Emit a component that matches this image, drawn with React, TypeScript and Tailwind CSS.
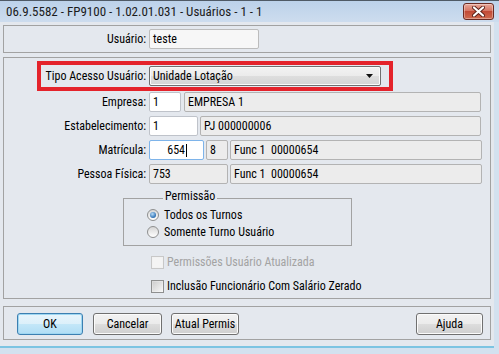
import React from "react";

const FONT = "font-['Roboto_Condensed','Liberation_Sans',sans-serif]";

function CloseBtn() {
  return (
    <div className="w-[31px] h-[17px] rounded-[3px] border border-[#6b2a22] bg-[linear-gradient(#e8a799,#d67563_45%,#c24a36_50%,#cf6a4f)] flex items-center justify-center shadow-[inset_0_0_0_1px_rgba(255,255,255,0.35)]">
      <svg width="13" height="11" viewBox="0 0 13 11">
        <path d="M2 1.5 L11 9.5 M11 1.5 L2 9.5" stroke="#5a2018" strokeWidth="4" strokeLinecap="round" />
        <path d="M2 1.5 L11 9.5 M11 1.5 L2 9.5" stroke="#ffffff" strokeWidth="2.2" strokeLinecap="round" />
      </svg>
    </div>
  );
}

function WhiteBox({ w, children }: { w: string; children?: React.ReactNode }) {
  return (
    <div className={`${w} h-[20px] bg-white border border-[#bfc3ca] rounded-[2px] flex items-center pl-[3px]`}>
      {children}
    </div>
  );
}

function GrayBox({ w, children }: { w: string; children?: React.ReactNode }) {
  return (
    <div className={`${w} h-[20px] bg-[#ececec] border border-[#b3b3b3] rounded-[2px] flex items-center pl-[3px] whitespace-nowrap`}>
      {children}
    </div>
  );
}

function Row({ label, children }: { label: string; children: React.ReactNode }) {
  return (
    <div className="flex items-center h-[20px]">
      <div className="w-[143px] text-right pr-[1px] whitespace-nowrap">{label}</div>
      <div className="ml-[2px] flex items-center gap-[2px]">{children}</div>
    </div>
  );
}

function Radio({ checked }: { checked?: boolean }) {
  return (
    <div className="w-[12px] h-[12px] rounded-full border border-[#8e8f8f] bg-[linear-gradient(#d6d6d6,#ffffff)] flex items-center justify-center">
      {checked && (
        <div className="w-[6px] h-[6px] rounded-full bg-[radial-gradient(circle_at_40%_35%,#b7dcf8,#2c6fb3_70%,#1d4f86)]" />
      )}
    </div>
  );
}

function Check({ disabled }: { disabled?: boolean }) {
  return (
    <div
      className={`w-[13px] h-[13px] border ${
        disabled ? "border-[#c8c8c8] bg-[#f2f2f2]" : "border-[#8e8f8f] bg-[linear-gradient(135deg,#d8d8d8,#f8f8f8)]"
      } flex items-center justify-center`}
    >
      <div className={`w-[9px] h-[9px] ${disabled ? "bg-[#f4f4f4]" : "bg-[linear-gradient(135deg,#cfcfcf,#f4f4f4)]"}`} />
    </div>
  );
}

function Btn({ w, children, def }: { w: string; children: React.ReactNode; def?: boolean }) {
  return (
    <div
      className={`${w} h-[22px] rounded-[3px] border flex items-center justify-center whitespace-nowrap ${
        def
          ? "border-[#3c7fb1] bg-[linear-gradient(#e8f5fc,#dcf0fa_50%,#c4e7f8_50%,#b0ddf5)] shadow-[inset_0_0_0_1px_#9fd7f2]"
          : "border-[#707070] bg-[linear-gradient(#f2f2f2,#ebebeb_50%,#dddddd_50%,#cfcfcf)] shadow-[inset_0_0_0_1px_#fbfbfb]"
      }`}
    >
      {children}
    </div>
  );
}

export default function App() {
  return (
    <div className={`w-[499px] h-[354px] overflow-hidden bg-[#d3e1ef] ${FONT} text-[12px] leading-none text-black`}>
      {/* Title bar */}
      <div className="h-[22px] flex items-center justify-between pl-[6px] pr-[5px] border-t border-[#4f5a66] bg-[linear-gradient(#bcd2ea,#cddcee)]">
        <span className="text-[13px] text-[#1b1b1b] whitespace-nowrap">06.9.5582 - FP9100 - 1.02.01.031 - Usuários - 1 - 1</span>
        <CloseBtn />
      </div>

      {/* Client */}
      <div className="w-[494px] h-[326px] bg-[#e4e8ee] pl-[3px] pt-[3px] border-b-[2px] border-[#7cc4e2]">
        {/* Panel 1 */}
        <div className="w-[488px] h-[28px] border border-[#a2a2a2] pt-[3px]">
          <div className="flex items-center h-[20px]">
            <div className="w-[143px] text-right pr-[1px]">Usuário:</div>
            <div className="ml-[2px] w-[110px] h-[20px] bg-[#f7f7f7] border border-[#bcbcbc] rounded-[2px] flex items-center pl-[3px]">teste</div>
          </div>
        </div>

        {/* Panel 2 */}
        <div className="mt-[4px] w-[488px] h-[242px] border border-[#a2a2a2] pt-[3px]">
          <div className="ml-[33px] w-[356px] h-[30px] border-[4px] border-[#e4232b] flex items-center">
            <div className="w-[106px] text-right pr-[1px] whitespace-nowrap">Tipo Acesso Usuário:</div>
            <div className="ml-[2px] w-[232px] h-[20px] rounded-[2px] border border-[#707070] bg-[linear-gradient(#f3f3f3,#ebebeb_50%,#dedede_50%,#d4d4d4)] shadow-[inset_0_0_0_1px_#fafafa] flex items-center justify-between pl-[3px] pr-[7px]">
              <span>Unidade Lotação</span>
              <svg width="7" height="4" viewBox="0 0 7 4">
                <path d="M0 0 H7 L3.5 4 Z" fill="#111" />
              </svg>
            </div>
          </div>

          <div className="mt-[1px] flex flex-col gap-[4px]">
            <Row label="Empresa:">
              <WhiteBox w="w-[32px]">1</WhiteBox>
              <GrayBox w="w-[297px] ml-[1px]">EMPRESA 1</GrayBox>
            </Row>
            <Row label="Estabelecimento:">
              <WhiteBox w="w-[49px]">1</WhiteBox>
              <GrayBox w="w-[281px]">PJ 000000006</GrayBox>
            </Row>
            <Row label="Matrícula:">
              <div className="w-[55px] h-[20px] bg-white border border-[#7eb4ea] rounded-[2px] flex items-center justify-end pr-[16px]">
                <span>654</span>
                <span className="w-[1px] h-[13px] bg-black ml-[1px]" />
              </div>
              <GrayBox w="w-[22px]">8</GrayBox>
              <GrayBox w="w-[252px]">Func 1&nbsp;&nbsp;00000654</GrayBox>
            </Row>
            <Row label="Pessoa Física:">
              <GrayBox w="w-[79px]">753</GrayBox>
              <GrayBox w="w-[252px]">Func 1&nbsp;&nbsp;00000654</GrayBox>
            </Row>
          </div>

          {/* Permissão group */}
          <fieldset className="mt-[6px] ml-[119px] w-[229px] h-[56px] border border-[#a2a2a2] pl-[23px] pt-0">
            <legend className="ml-[16px] px-[2px] pb-[4px] leading-[12px]">Permissão</legend>
            <div className="flex items-center h-[17px] gap-[5px]">
              <Radio checked />
              <span>Todos os Turnos</span>
            </div>
            <div className="flex items-center h-[17px] gap-[5px]">
              <Radio />
              <span>Somente Turno Usuário</span>
            </div>
          </fieldset>

          <div className="ml-[147px] mt-[8px] flex items-center h-[16px] gap-[3px] text-[#a3a3a3]">
            <Check disabled />
            <span>Permissões Usuário Atualizada</span>
          </div>
          <div className="ml-[147px] mt-[8px] flex items-center h-[16px] gap-[3px]">
            <Check />
            <span>Inclusão Funcionário Com Salário Zerado</span>
          </div>
        </div>

        {/* Panel 3 */}
        <div className="mt-[7px] w-[488px] h-[34px] border border-[#a2a2a2] pt-[6px] pl-[13px] pr-[7px] flex items-start">
          <Btn w="w-[66px]" def>OK</Btn>
          <div className="ml-[10px]">
            <Btn w="w-[69px]">Cancelar</Btn>
          </div>
          <div className="ml-[9px]">
            <Btn w="w-[68px]">Atual Permis</Btn>
          </div>
          <div className="ml-auto">
            <Btn w="w-[67px]">Ajuda</Btn>
          </div>
        </div>
      </div>
    </div>
  );
}
